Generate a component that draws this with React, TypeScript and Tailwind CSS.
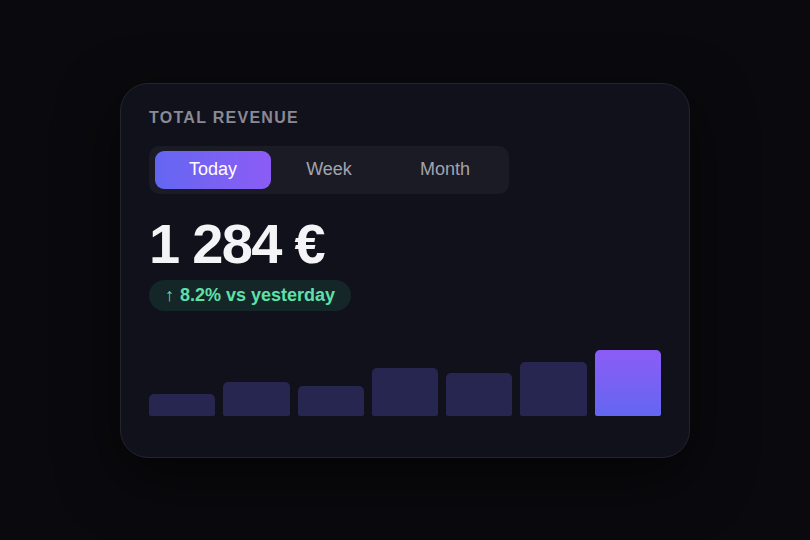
import React from "react";

const bars = [22, 34, 30, 48, 43, 54, 66];

export default function App() {
  return (
    <div
      className="flex h-screen w-full items-center justify-center bg-[#0a0a0e]"
      style={{ fontFamily: '"Liberation Sans", Arial, sans-serif' }}
    >
      <div className="flex w-[570px] flex-col rounded-[28px] border border-[#23242e] bg-[#10111a] px-[28px] pt-[24px] pb-[41px] shadow-[0_20px_60px_rgba(0,0,0,0.6)]">
        <div className="text-[16px] font-bold leading-[20px] tracking-[0.08em] text-[#8a8a96]">
          TOTAL REVENUE
        </div>
        <div className="mt-[18px] flex w-[360px] rounded-[10px] bg-[#1a1b25] px-[6px] py-[5px]">
          <div className="flex h-[38px] w-[116px] items-center justify-center rounded-[9px] bg-gradient-to-r from-[#6366f1] to-[#8b5cf6] text-[18px] font-medium text-white">
            Today
          </div>
          <div className="flex h-[38px] w-[116px] items-center justify-center text-[18px] text-[#a3a3ad]">
            Week
          </div>
          <div className="flex h-[38px] w-[116px] items-center justify-center text-[18px] text-[#a3a3ad]">
            Month
          </div>
        </div>
        <div className="mt-[22px] text-[56px] font-bold leading-[56px] tracking-[-0.03em] text-[#f4f4f7]">
          1 284 €
        </div>
        <div className="mt-[8px] flex">
          <div className="flex h-[31px] items-center gap-[6px] rounded-full bg-[#142628] px-[16px] text-[18px] font-bold text-[#5fe0a9]">
            <span>↑</span>
            <span>8.2% vs yesterday</span>
          </div>
        </div>
        <div className="mt-[39px] flex h-[66px] items-end gap-[8px]">
          {bars.map((h, i) => (
            <div
              key={i}
              className={
                i === bars.length - 1
                  ? "flex-1 rounded-t-[5px] rounded-b-[2px] bg-gradient-to-b from-[#8b5cf6] to-[#6366f1]"
                  : "flex-1 rounded-t-[5px] rounded-b-[2px] bg-[#272650]"
              }
              style={{ height: h }}
            />
          ))}
        </div>
      </div>
    </div>
  );
}
